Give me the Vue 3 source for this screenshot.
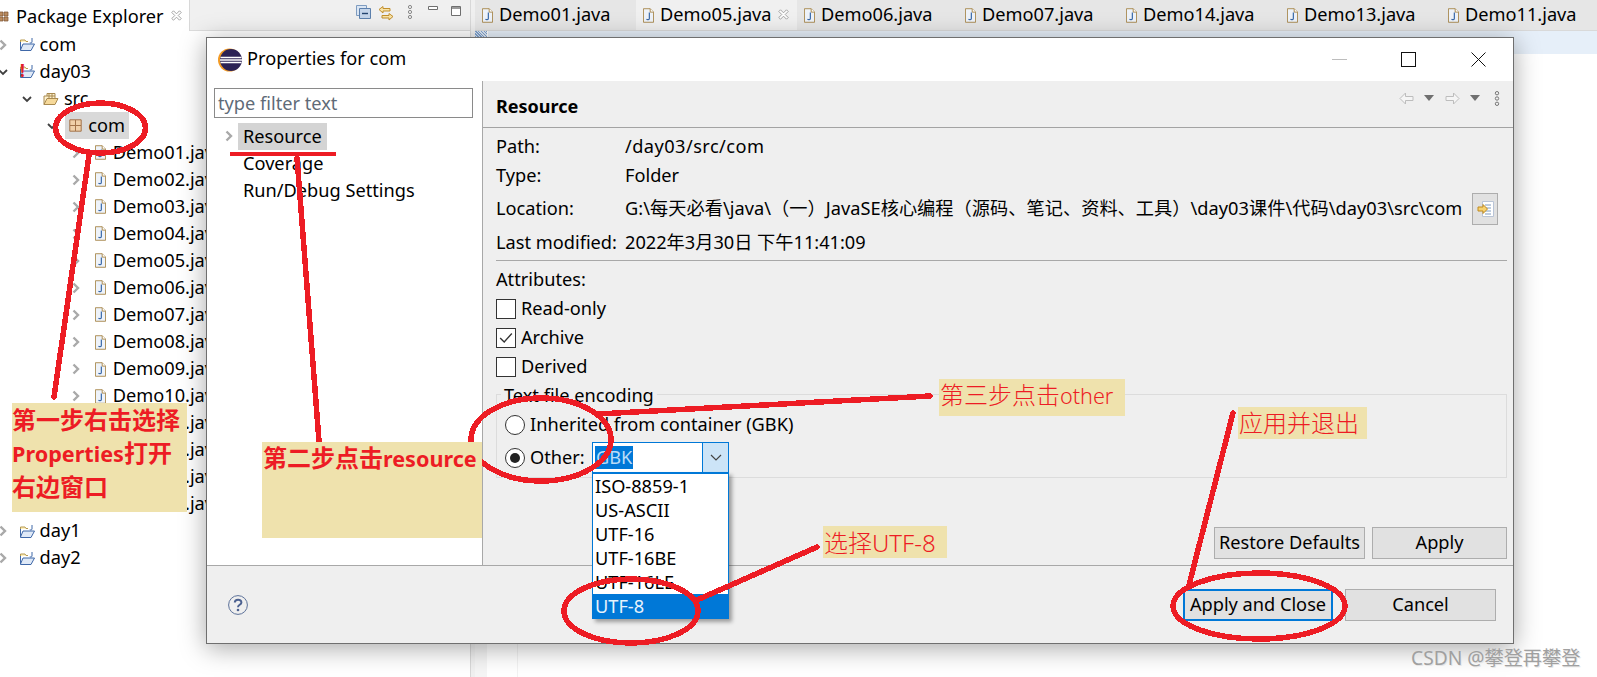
<script setup>
const tree = [
  { level: 0, icon: 'proj', label: 'com' },
  { level: 0, icon: 'projerr', label: 'day03', open: true },
  { level: 1, icon: 'srcfolder', label: 'src', open: true },
  { level: 2, icon: 'pkg', label: 'com', open: true, selected: true },
  ...['01','02','03','04','05','06','07','08','09','10','11','12','13','14'].map(n => ({ level: 3, icon: 'java', label: `Demo${n}.java` })),
  { level: 0, icon: 'proj', label: 'day1' },
  { level: 0, icon: 'proj', label: 'day2' },
]
const levelClass = l => `lvl${l}`
const tabs = ['Demo01', 'Demo05', 'Demo06', 'Demo07', 'Demo14', 'Demo13', 'Demo11']
const encodings = ['ISO-8859-1', 'US-ASCII', 'UTF-16', 'UTF-16BE', 'UTF-16LE', 'UTF-8']
</script>

<template>
  <div class="page">
    <svg class="defs" width="0" height="0">
      <defs>
        <symbol id="java" viewBox="0 0 13 17">
          <path d="M.5.5h8l4 4v12H.5z" fill="#eef3fa" stroke="#a07c3a"/>
          <path d="M8.5.5v4h4" fill="#fff" stroke="#a07c3a"/>
          <path d="M7.5 5v7c0 1.6-2.4 1.8-3.4.8" fill="none" stroke="#3868a8" stroke-width="1.4"/>
        </symbol>
        <symbol id="proj" viewBox="0 0 17 15">
          <path d="M1.5 5V13.5H12L15.5 7H4L1.5 13" fill="#dfe9f7" stroke="#3f68a8"/>
          <path d="M1.5 5V3H6L7 4.5H9" fill="#fdeeb8" stroke="#b89a50"/>
          <path d="M13 1v4c0 1-1.4 1.2-2.2.6" fill="none" stroke="#3f68a8"/>
        </symbol>
        <symbol id="srcfolder" viewBox="0 0 16 14">
          <path d="M1 12.5V4H4V1.5H12V6" fill="#fdf1cf" stroke="#a98a50"/>
          <path d="M6 1.5V6M9 1.5V6M4 4H12" stroke="#a98a50" fill="none"/>
          <path d="M1 12.5L4 6.5H15L12 12.5Z" fill="#f6d99a" stroke="#a98a50"/>
        </symbol>
        <symbol id="pkg" viewBox="0 0 13 13">
          <path d="M.8.8h11.4v11.4H.8z" fill="#f0cfa8" stroke="#a3734a"/>
          <path d="M6.5 1v11M1 6.5h11" stroke="#a3734a"/>
        </symbol>
        <symbol id="closex" viewBox="0 0 11 11">
          <path d="M2.5.8L5.5 3.8 8.5.8 10.2 2.5 7.2 5.5 10.2 8.5 8.5 10.2 5.5 7.2 2.5 10.2.8 8.5 3.8 5.5.8 2.5Z" fill="#fff" stroke="#9a9a9a" stroke-width=".9"/>
        </symbol>
        <symbol id="chev-r" viewBox="0 0 12 12">
          <path d="M3.5 1.5L8 6 3.5 10.5" fill="none" stroke="#a9a9a9" stroke-width="2.4"/>
        </symbol>
        <symbol id="chev-d" viewBox="0 0 12 12">
          <path d="M2 4L6 8 10 4" fill="none" stroke="#404040" stroke-width="1.8"/>
        </symbol>
      </defs>
    </svg>

    <div class="workbench">
      <aside class="explorer">
        <div class="view-tabs">
          <div class="view-tab">
            <svg class="view-icon" viewBox="0 0 10 12" width="10" height="12"><path d="M0 1h4v4H0zM5 1h4v4H5zM0 6h4v4H0zM5 6h4v4H5z" fill="#b98a5e" stroke="#7a5230" stroke-width=".7"/></svg>
            <span class="view-title">Package Explorer</span>
            <svg class="view-close" width="11" height="11"><use href="#closex"/></svg>
          </div>
          <div class="view-tools">
            <svg class="tool t-collapse" viewBox="0 0 15 14" width="15" height="14"><path d="M.5.5h10v10H.5z" fill="#dbe6f3" stroke="#7f9cc0"/><path d="M3.5 3.5h11v10h-11z" fill="#c4d5ea" stroke="#5c80ad"/><path d="M6 8.5h6" stroke="#24456f" stroke-width="1.4"/></svg>
            <svg class="tool t-link" viewBox="0 0 16 16" width="16" height="16"><path d="M1 4.5L5 1.5V3.5H12V6H5V8ZM15 11.5L11 8.5V10.5H4V13H11V15Z" fill="#f8e3a8" stroke="#c18f2c"/></svg>
            <svg class="tool t-dots" viewBox="0 0 6 14" width="6" height="14"><circle cx="3" cy="2" r="1.6" fill="none" stroke="#8a8a8a"/><circle cx="3" cy="7" r="1.6" fill="none" stroke="#8a8a8a"/><circle cx="3" cy="12" r="1.6" fill="none" stroke="#8a8a8a"/></svg>
            <svg class="tool t-min" viewBox="0 0 10 4" width="10" height="4"><path d="M.5.5h9v3h-9z" fill="#fff" stroke="#6f6f6f"/></svg>
            <svg class="tool t-max" viewBox="0 0 10 10" width="10" height="10"><path d="M.5.5h9v9h-9z" fill="#fff" stroke="#6f6f6f"/><path d="M0 2h10" stroke="#6f6f6f" stroke-width="1.4"/></svg>
          </div>
        </div>
        <div class="pkg-tree">
          <div v-for="row in tree" :key="row.level + row.label" class="pkg-row" :class="levelClass(row.level)">
            <svg class="chev" width="12" height="12"><use :href="row.open ? '#chev-d' : '#chev-r'"/></svg>
            <span class="row-icon">
              <svg v-if="row.icon === 'java'" width="11" height="15"><use href="#java"/></svg>
              <svg v-else-if="row.icon === 'pkg'" width="13" height="13"><use href="#pkg"/></svg>
              <svg v-else-if="row.icon === 'srcfolder'" width="16" height="14"><use href="#srcfolder"/></svg>
              <svg v-else width="17" height="15"><use href="#proj"/></svg>
              <span v-if="row.icon === 'projerr'" class="err">!</span>
            </span>
            <span class="row-label" :class="{ selected: row.selected }">{{ row.label }}</span>
          </div>
        </div>
      </aside>

      <div class="splitter"></div>

      <main class="editor">
        <div class="editor-tabs">
          <div v-for="t in tabs" :key="t" class="editor-tab" :class="{ active: t === 'Demo05' }">
            <svg width="11" height="15"><use href="#java"/></svg>
            <span>{{ t }}.java</span>
            <svg v-if="t === 'Demo05'" class="tab-close" width="11" height="11"><use href="#closex"/></svg>
          </div>
        </div>
        <div class="editor-body">
          <div class="ruler"></div>
          <div class="code">
            <div class="current-line"></div>
          </div>
        </div>
      </main>
    </div>

    <section class="dialog">
      <header class="title-bar">
        <svg class="eclipse" viewBox="0 0 26 24" width="26" height="24">
          <circle cx="12.5" cy="12" r="11.5" fill="#f39a23"/>
          <circle cx="14" cy="12" r="11" fill="#2c2255"/>
          <path d="M3.5 9.5h21M3 12h22M3.5 14.5h21" stroke="#fff" stroke-width="1.3"/>
        </svg>
        <span class="title-text">Properties for com</span>
        <div class="win-buttons">
          <span class="win-min"></span>
          <span class="win-max"></span>
          <svg class="win-close" viewBox="0 0 15 15" width="15" height="15"><path d="M.5.5l14 14M14.5.5l-14 14" stroke="#111" stroke-width="1"/></svg>
        </div>
      </header>

      <div class="dialog-body">
        <nav class="pref-pane">
          <div class="filter">type filter text</div>
          <div class="pref-row">
            <svg class="pref-chev" width="12" height="12"><use href="#chev-r"/></svg>
            <span class="pref-label selected">Resource</span>
          </div>
          <div class="pref-row"><span class="pref-label">Coverage</span></div>
          <div class="pref-row"><span class="pref-label">Run/Debug Settings</span></div>
        </nav>

        <div class="page-pane">
          <div class="page-head">
            <h2>Resource</h2>
            <div class="nav-tools">
              <svg viewBox="0 0 15 13" width="15" height="13"><path d="M6.5 1L1 6.5 6.5 12V8.5H14V4.5H6.5Z" fill="#f5f5f5" stroke="#bdbdbd"/></svg>
              <span class="tri"></span>
              <svg viewBox="0 0 15 13" width="15" height="13"><path d="M8.5 1L14 6.5 8.5 12V8.5H1V4.5H8.5Z" fill="#f5f5f5" stroke="#bdbdbd"/></svg>
              <span class="tri"></span>
              <svg class="nav-dots" viewBox="0 0 6 15" width="6" height="15"><circle cx="3" cy="2.2" r="1.7" fill="none" stroke="#777"/><circle cx="3" cy="7.5" r="1.7" fill="none" stroke="#777"/><circle cx="3" cy="12.8" r="1.7" fill="none" stroke="#777"/></svg>
            </div>
          </div>

          <div class="info">
            <span>Path:</span><span class="wide">/day03/src/com</span>
            <span>Type:</span><span>Folder</span>
            <span>Location:</span>
            <span class="loc">
              <span class="loc-text">G:\每天必看\java\（一）JavaSE核心编程（源码、笔记、资料、工具）\day03课件\代码\day03\src\com</span>
              <button class="loc-btn">
                <svg viewBox="0 0 17 16" width="17" height="16"><path d="M5.5.5h11v15h-11z" fill="#fff" stroke="#b9c4d6"/><path d="M8 4h6M8 7h6M8 10h6M8 13h6" stroke="#7f9cc0"/><path d="M1 6h5V3.5L10.5 8 6 12.5V10H1Z" fill="#f7d26f" stroke="#c08a1e"/></svg>
              </button>
            </span>
            <span>Last modified:</span><span>2022年3月30日 下午11:41:09</span>
          </div>

          <div class="rule"></div>

          <div class="attr-title">Attributes:</div>
          <div class="check-row"><span class="check"></span>Read-only</div>
          <div class="check-row">
            <span class="check">
              <svg viewBox="0 0 20 20" width="18" height="18"><path d="M3.5 10l4.5 4.5 8.5-9.5" fill="none" stroke="#333" stroke-width="1.5"/></svg>
            </span>Archive
          </div>
          <div class="check-row"><span class="check"></span>Derived</div>

          <div class="group">
            <span class="legend">Text file encoding</span>
            <div class="radio-row"><span class="radio"></span>Inherited from container (GBK)</div>
            <div class="radio-row">
              <span class="radio on"></span><span class="other">Other:</span>
              <div class="combo">
                <span class="combo-text"><span class="combo-sel">GBK</span></span>
                <span class="combo-arrow">
                  <svg viewBox="0 0 12 7" width="12" height="7"><path d="M1 1l5 5 5-5" fill="none" stroke="#444" stroke-width="1.2"/></svg>
                </span>
                <ul class="combo-list">
                  <li v-for="e in encodings" :key="e" :class="{ picked: e === 'UTF-8' }">{{ e }}</li>
                </ul>
              </div>
            </div>
          </div>

          <div class="page-buttons">
            <button class="btn restore">Restore Defaults</button>
            <button class="btn apply">Apply</button>
          </div>
        </div>
      </div>

      <footer class="dialog-foot">
        <svg class="help" viewBox="0 0 20 20" width="20" height="20">
          <circle cx="10" cy="10" r="9.4" fill="none" stroke="#5c7199"/>
          <path d="M6.8 7.6C6.8 3.8 13.4 3.8 13.4 7.4 13.4 9.8 10 9.8 10 12.2" fill="none" stroke="#4c6190" stroke-width="2"/>
          <circle cx="10" cy="15" r="1.3" fill="#4c6190"/>
        </svg>
        <button class="btn primary">Apply and Close</button>
        <button class="btn cancel">Cancel</button>
      </footer>
    </section>

    <svg class="ink" width="1597" height="677" shape-rendering="crispEdges">
      <g fill="none" stroke="#ed1c24" stroke-width="5.5" stroke-linecap="round">
        <ellipse cx="100.5" cy="128" rx="45" ry="25"/>
        <path d="M89 155L54 397"/>
        <path d="M232 154H334" stroke-width="4.5"/>
        <path d="M297 158L319 441"/>
        <path d="M930 396L598 414"/>
        <ellipse cx="541" cy="439.5" rx="70" ry="41.5"/>
        <path d="M817 547L697 600"/>
        <ellipse cx="631" cy="611" rx="67" ry="32"/>
        <path d="M1233 413L1189 585"/>
        <ellipse cx="1259" cy="606" rx="86" ry="33"/>
      </g>
    </svg>

    <div class="note n1"><b>第一步右击选择</b><b><span class="lat">Properties</span>打开</b><b>右边窗口</b></div>
    <div class="note n2"><b>第二步点击<span class="lat">resource</span></b></div>
    <div class="note n3">第三步点击<span class="lat">other</span></div>
    <div class="note n4">选择UTF-8</div>
    <div class="note n5">应用并退出</div>
    <div class="watermark">CSDN @攀登再攀登</div>
  </div>
</template>

<style>
html, body { margin: 0; padding: 0; background: #fff; }
</style>

<style scoped>
* { box-sizing: border-box; }
.page {
  position: relative;
  width: 1597px;
  height: 677px;
  overflow: hidden;
  background: #fff;
  color: #000;
  font-family: "Noto Sans", "Noto Sans CJK SC", sans-serif;
  font-size: 18.2px;
  line-height: 1.2;
}
.defs { position: absolute; }
.workbench { display: flex; height: 100%; }

/* package explorer */
.explorer { width: 470px; flex: none; overflow: hidden; }
.view-tabs { display: flex; height: 31px; }
.view-tab { width: 190px; display: flex; align-items: center; background: #fff; border-right: 1px solid #d8d8d8; position: relative; padding-top: 2px; }
.view-icon { margin-left: -1px; }
.view-title { margin-left: 7px; white-space: nowrap; }
.view-close { position: absolute; left: 171px; top: 10px; }
.view-tools { flex: 1; background: #f0f0f0; border-bottom: 1px solid #dcdcdc; position: relative; display: flex; align-items: flex-start; padding-top: 5px; }
.tool { flex: none; }
.t-collapse { margin-left: 166px; }
.t-link { margin-left: 7px; }
.t-dots { margin-left: 13px; }
.t-min { margin-left: 15px; margin-top: 1px; }
.t-max { margin-left: 13px; margin-top: 1px; }
.pkg-row { display: flex; align-items: center; height: 27.05px; white-space: nowrap; }
.lvl0 { margin-left: -3px; }
.lvl1 { margin-left: 21.4px; }
.lvl2 { margin-left: 45.8px; }
.lvl3 { margin-left: 70.2px; }
.chev { flex: none; }
.row-icon { width: 18px; margin-left: 9px; margin-right: 3.5px; display: flex; justify-content: center; position: relative; flex: none; }
.row-label.selected { background: #d9d9d9; margin-left: -23px; padding: 0 4px 0 23px; height: 27px; line-height: 27px; }
.lvl2 .row-icon { z-index: 1; }
.err { position: absolute; left: 2px; top: -3px; color: #e0202a; font-weight: 700; font-size: 17px; }
.splitter { width: 5px; background: #f0f0f0; border-left: 1px solid #d8d8d8; flex: none; }

/* editor */
.editor { flex: 1; min-width: 0; display: flex; flex-direction: column; }
.editor-tabs { display: flex; height: 31px; background: #e6e6e6; border-bottom: 1px solid #d9d9d9; flex: none; }
.editor-tab { width: 161px; flex: none; display: flex; align-items: center; gap: 6px; padding-left: 7px; white-space: nowrap; position: relative; height: 30px; }
.editor-tab.active { background: #f0f0f0; }
.tab-close { position: absolute; left: 142px; top: 9px; }
.editor-body { flex: 1; display: flex; }
.ruler { width: 12px; background: #f5f5f5; flex: none; }
.ruler::before { content: ""; display: block; height: 6px; background: repeating-linear-gradient(45deg, #7fa3d0 0 1px, #dfe9f5 1px 2px); }
.code { flex: 1; border-left: 1px solid #f2f2f2; margin-left: 30px; position: relative; }
.current-line { height: 23px; background: #e6eff9; margin-left: -30px; }

/* dialog */
.dialog {
  position: absolute;
  left: 206px;
  top: 37px;
  width: 1308px;
  height: 607px;
  display: flex;
  flex-direction: column;
  background: #efefef;
  border: 1px solid #6f6f6f;
  box-shadow: 0 4px 24px rgba(0, 0, 0, .35);
}
.title-bar { height: 43px; background: #fff; display: flex; align-items: center; padding-left: 10px; flex: none; }
.eclipse { flex: none; }
.title-text { margin-left: 4px; margin-top: -2px; }
.win-buttons { margin-left: auto; display: flex; align-items: center; }
.win-min { width: 15px; height: 1px; background: #bdbdbd; }
.win-max { width: 15px; height: 15px; border: 1.4px solid #111; margin-left: 54px; }
.win-close { margin-left: 55px; margin-right: 27px; }
.dialog-body { flex: 1; display: flex; min-height: 0; }
.pref-pane { width: 276px; flex: none; background: #fff; border-right: 1px solid #a8a8a8; padding: 7px 0 0 7px; }
.filter { width: 259px; height: 30px; border: 1px solid #8a8a8a; color: #5f6b78; padding-left: 3px; line-height: 28px; margin-bottom: 5px; }
.pref-row { display: flex; align-items: center; height: 27px; padding-left: 24px; position: relative; }
.pref-chev { position: absolute; left: 9px; top: 7px; }
.pref-label { white-space: nowrap; padding: 0 5px; line-height: 27px; }
.pref-label.selected { background: #d4d4d4; }

.page-pane { flex: 1; min-width: 0; display: flex; flex-direction: column; padding: 0 6px 6px 13px; }
.page-head { height: 47px; margin: 0 -6px 0 -13px; padding-left: 13px; padding-right: 14px; border-bottom: 1px solid #a3a3a3; display: flex; align-items: center; flex: none; }
.page-head h2 { margin: 0; font-size: 18px; font-weight: 700; padding-top: 5px; }
.nav-tools { margin-left: auto; display: flex; align-items: center; margin-top: -12px; }
.nav-tools svg { flex: none; }
.tri { width: 0; height: 0; border-left: 5.5px solid transparent; border-right: 5.5px solid transparent; border-top: 6px solid #6f6f6f; margin: 0 11px 0 10px; }
.nav-dots { margin-left: 3px; margin-right: -1px; }
.info { display: grid; grid-template-columns: 129px 1fr; grid-template-rows: 29px 29px 38px 30px; align-items: center; margin-top: 4px; flex: none; }
.wide { letter-spacing: .45px; }
.loc { display: flex; justify-content: space-between; align-items: center; padding-right: 9px; white-space: nowrap; }
.loc-text { letter-spacing: .04px; }
.loc-btn { width: 26px; height: 32px; padding: 0; background: #e1e1e1; border: 1px solid #adadad; display: flex; align-items: center; justify-content: center; }
.rule { height: 1px; background: #a8a8a8; margin-top: 2px; flex: none; }
.attr-title { height: 33px; line-height: 36px; flex: none; }
.check-row { display: flex; align-items: center; height: 29px; gap: 5px; flex: none; }
.check { width: 20px; height: 20px; background: #fff; border: 1px solid #333; display: flex; align-items: center; justify-content: center; flex: none; }
.group { position: relative; height: 84px; border: 1px solid #dcdcdc; margin-top: 13px; padding: 13px 0 0 8px; flex: none; }
.legend { position: absolute; left: 4px; top: -12px; background: #efefef; padding: 0 3px; line-height: 24px; }
.radio-row { display: flex; align-items: center; height: 33px; gap: 5px; }
.radio { width: 20px; height: 20px; border-radius: 50%; background: #fff; border: 1px solid #333; flex: none; display: flex; align-items: center; justify-content: center; }
.radio.on::after { content: ""; width: 10px; height: 10px; border-radius: 50%; background: #222; }
.other { width: 57px; }
.combo { position: relative; width: 137px; height: 31px; background: #fff; border: 1px solid #0078d7; display: flex; }
.combo-text { flex: 1; padding-left: 2px; display: flex; align-items: center; }
.combo-sel { background: #0078d7; color: #b9dcf7; padding: 0 1px; line-height: 23px; }
.combo-arrow { width: 26px; background: #cce4f7; border-left: 1px solid #0078d7; display: flex; align-items: center; justify-content: center; }
.combo-list { position: absolute; z-index: 5; left: -1px; top: 29px; width: 137px; margin: 0; padding: 0; list-style: none; background: #fff; border: 1px solid #0078d7; border-top-width: 2px; box-shadow: 3px 3px 4px rgba(0, 0, 0, .35); }
.combo-list li { height: 24px; line-height: 24px; padding-left: 2px; }
.combo-list li.picked { background: #0078d7; color: #e6f2fc; }
.page-buttons { margin-top: auto; display: flex; justify-content: flex-end; gap: 7px; flex: none; }
.btn { height: 32px; padding: 0; background: #e1e1e1; border: 1px solid #adadad; color: #000; font: inherit; white-space: nowrap; }
.restore { width: 151px; }
.apply { width: 135px; }
.dialog-foot { height: 78px; flex: none; border-top: 1px solid #a8a8a8; display: flex; align-items: center; padding: 0 17px 0 21px; }
.help { flex: none; margin-right: auto; }
.primary { width: 150px; border: 2px solid #0078d7; }
.cancel { width: 151px; margin-left: 12px; }

/* annotations */
.ink { position: absolute; left: 0; top: 0; pointer-events: none; z-index: 10; }
.note { position: absolute; z-index: 11; background: #efe2ad; color: #ed1c24; font-size: 24px; white-space: nowrap; line-height: 32px; }
.note b { display: block; font-weight: 700; }
.lat { font-size: 21.6px; }
.n1 { left: 12px; top: 403px; width: 175px; height: 109px; line-height: 33px; }
.n2 { left: 262px; top: 442px; width: 220px; height: 96px; padding-left: 1px; }
.n3 { left: 939px; top: 379px; width: 186px; height: 37px; padding-left: 1px; font-weight: 300; }
.n4 { left: 823px; top: 526px; width: 124px; height: 32px; padding-left: 1px; line-height: 33px; font-weight: 300; }
.n5 { left: 1238px; top: 407px; width: 129px; height: 32px; padding-left: 1px; line-height: 31px; font-weight: 300; }
.watermark { position: absolute; z-index: 11; left: 1411px; top: 646px; font-size: 19.2px; color: #a0a0a0; text-shadow: 1px 1px 0 #e6e6e6; white-space: nowrap; }
</style>
